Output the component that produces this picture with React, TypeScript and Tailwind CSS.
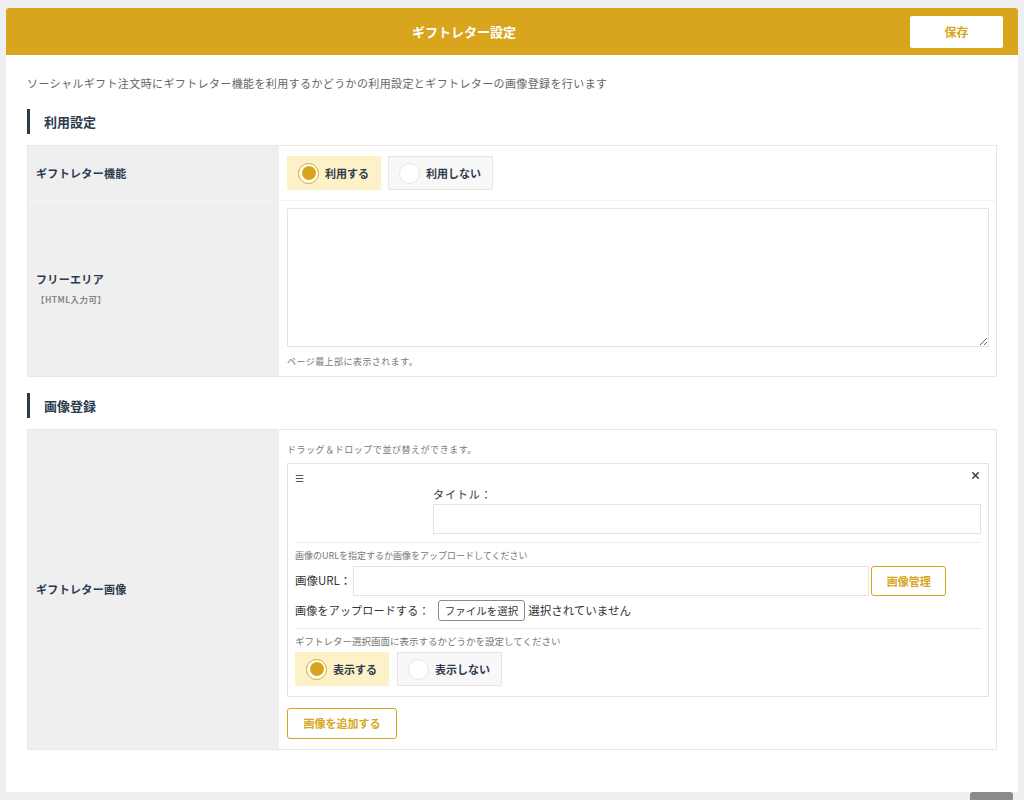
import { useState } from 'react';
import { X } from 'lucide-react';

const font = { fontFamily: '"Noto Sans CJK JP", "Noto Sans", sans-serif' };

function Radio({ label, checked, onClick }: { label: string; checked: boolean; onClick: () => void }) {
  return (
    <button
      onClick={onClick}
      className={
        checked
          ? 'flex items-center h-[34px] pl-[10px] pr-[11px] bg-[#fdf1c7] border border-[#fdf1c7]'
          : 'flex items-center h-[34px] pl-[10px] pr-[11px] bg-[#f8f8f8] border border-[#e6e6e6]'
      }
    >
      {checked ? (
        <span className="w-[21px] h-[21px] rounded-full border-[1.5px] border-[#d8a51c] bg-white flex items-center justify-center">
          <span className="w-[14px] h-[14px] rounded-full bg-[#d8a51c]" />
        </span>
      ) : (
        <span className="w-[21px] h-[21px] rounded-full border border-[#e6e6e6] bg-white" />
      )}
      <span className="ml-[6px] text-[11px] font-bold text-[#2b3a4d]">{label}</span>
    </button>
  );
}

function SectionTitle({ children }: { children: string }) {
  return (
    <div className="flex items-center h-[25px] border-l-[3px] border-[#2b3a4d] pl-[14px]">
      <span className="text-[13px] font-bold text-[#2b3a4d]">{children}</span>
    </div>
  );
}

export default function App() {
  const [useLetter, setUseLetter] = useState(true);
  const [show, setShow] = useState(true);

  return (
    <div className="min-h-screen bg-[#efefef] pt-[8px] px-[6px] relative" style={font}>
      <div className="bg-white rounded-t-[3px] pb-[42px]">
        {/* header */}
        <div className="h-[47px] bg-[#d8a51c] rounded-t-[3px] flex items-center pr-[15px]">
          <div className="flex-1 pl-[12px] text-center text-white text-[13px] font-bold">ギフトレター設定</div>
          <button className="w-[93px] h-[32px] bg-white rounded-[2px] text-[#d8a51c] text-[12px] font-bold">
            保存
          </button>
        </div>

        <div className="px-[21px]">
          <p className="pt-[20px] text-[11px] text-[#666] tracking-[0.035em] leading-[16px]">
            ソーシャルギフト注文時にギフトレター機能を利用するかどうかの利用設定とギフトレターの画像登録を行います
          </p>

          <div className="mt-[18px]">
            <SectionTitle>利用設定</SectionTitle>
          </div>

          <div className="mt-[11px] border border-[#e6e6e6]">
            <div className="flex border-b border-[#f4f4f4]">
              <div className="w-[251px] bg-[#efefef] flex items-center pl-[8px] text-[11px] font-bold text-[#2b3a4d] tracking-[0.03em]">
                ギフトレター機能
              </div>
              <div className="flex-1 flex gap-[7px] pl-[8px] pt-[10px] pb-[10px]">
                <Radio label="利用する" checked={useLetter} onClick={() => setUseLetter(true)} />
                <Radio label="利用しない" checked={!useLetter} onClick={() => setUseLetter(false)} />
              </div>
            </div>
            <div className="flex">
              <div className="w-[251px] bg-[#efefef] flex flex-col justify-center pl-[8px]">
                <div className="text-[11px] font-bold text-[#2b3a4d] tracking-[0.03em]">フリーエリア</div>
                <div className="mt-[6px] text-[8.5px] font-bold text-[#888] tracking-[0.05em]">【HTML入力可】</div>
              </div>
              <div className="flex-1 pl-[8px] pr-[7px] pt-[7px] pb-[7px]">
                <textarea className="block w-full h-[139px] border border-[#e3e3e3] rounded-[1px] outline-none" />
                <div className="mt-[8px] text-[9px] text-[#777] tracking-[0.05em] leading-[14px]">
                  ページ最上部に表示されます。
                </div>
              </div>
            </div>
          </div>

          <div className="mt-[16px]">
            <SectionTitle>画像登録</SectionTitle>
          </div>

          <div className="mt-[11px] border border-[#e6e6e6] flex">
            <div className="w-[251px] bg-[#efefef] flex items-center pl-[8px] text-[11px] font-bold text-[#2b3a4d] tracking-[0.03em]">
              ギフトレター画像
            </div>
            <div className="flex-1 pl-[8px] pr-[7px] pt-[13px] pb-[10px]">
              <div className="text-[9px] text-[#777] tracking-[0.06em] leading-[14px]">
                ドラッグ＆ドロップで並び替えができます。
              </div>
              <div className="mt-[6px] border border-[#e3e3e3] relative px-[7px] pt-[8px] pb-[10px]">
                <X className="absolute right-[7px] top-[6px] text-[#444]" size={11} strokeWidth={3.5} />
                <div className="text-[10px] text-[#555] leading-[12px]">☰</div>
                <div className="flex">
                  <div className="w-[138px]" />
                  <div className="flex-1">
                    <div className="mt-[3px] text-[11px] text-[#333] tracking-[0.08em] leading-[14px]">タイトル：</div>
                    <input className="mt-[3px] block w-full h-[30px] border border-[#e3e3e3] outline-none" />
                  </div>
                </div>
                <div className="mt-[8px] border-t border-[#ececec]" />
                <div className="mt-[6px] text-[9px] text-[#777] leading-[14px]">
                  画像のURLを指定するか画像をアップロードしてください
                </div>
                <div className="mt-[3px] flex items-center">
                  <span className="text-[11.5px] text-[#333]">画像URL：</span>
                  <input className="ml-[2px] w-[516px] h-[30px] border border-[#e3e3e3] outline-none" />
                  <button className="ml-[2px] w-[75px] h-[30px] border border-[#d8a51c] rounded-[3px] text-[11px] font-bold text-[#d8a51c]">
                    画像管理
                  </button>
                </div>
                <div className="mt-[4px] flex items-center">
                  <span className="text-[11px] text-[#333] tracking-[0.02em]">画像をアップロードする：</span>
                  <button className="ml-[8px] h-[21px] px-[6px] border border-[#8a8a8a] rounded-[3px] text-[10.5px] text-[#333] bg-white">
                    ファイルを選択
                  </button>
                  <span className="ml-[3px] text-[11.5px] text-[#333]">選択されていません</span>
                </div>
                <div className="mt-[7px] border-t border-[#ececec]" />
                <div className="mt-[5px] text-[9.5px] text-[#777] leading-[14px]">
                  ギフトレター選択画面に表示するかどうかを設定してください
                </div>
                <div className="mt-[4px] flex gap-[8px]">
                  <Radio label="表示する" checked={show} onClick={() => setShow(true)} />
                  <Radio label="表示しない" checked={!show} onClick={() => setShow(false)} />
                </div>
              </div>
              <button className="mt-[11px] w-[110px] h-[31px] border border-[#d8a51c] rounded-[3px] text-[11px] font-bold text-[#d8a51c]">
                画像を追加する
              </button>
            </div>
          </div>
        </div>
      </div>

      <div className="fixed right-[11px] bottom-[-32px] w-[43px] h-[40px] bg-[#8a8a8a] rounded-[3px]" />
    </div>
  );
}
